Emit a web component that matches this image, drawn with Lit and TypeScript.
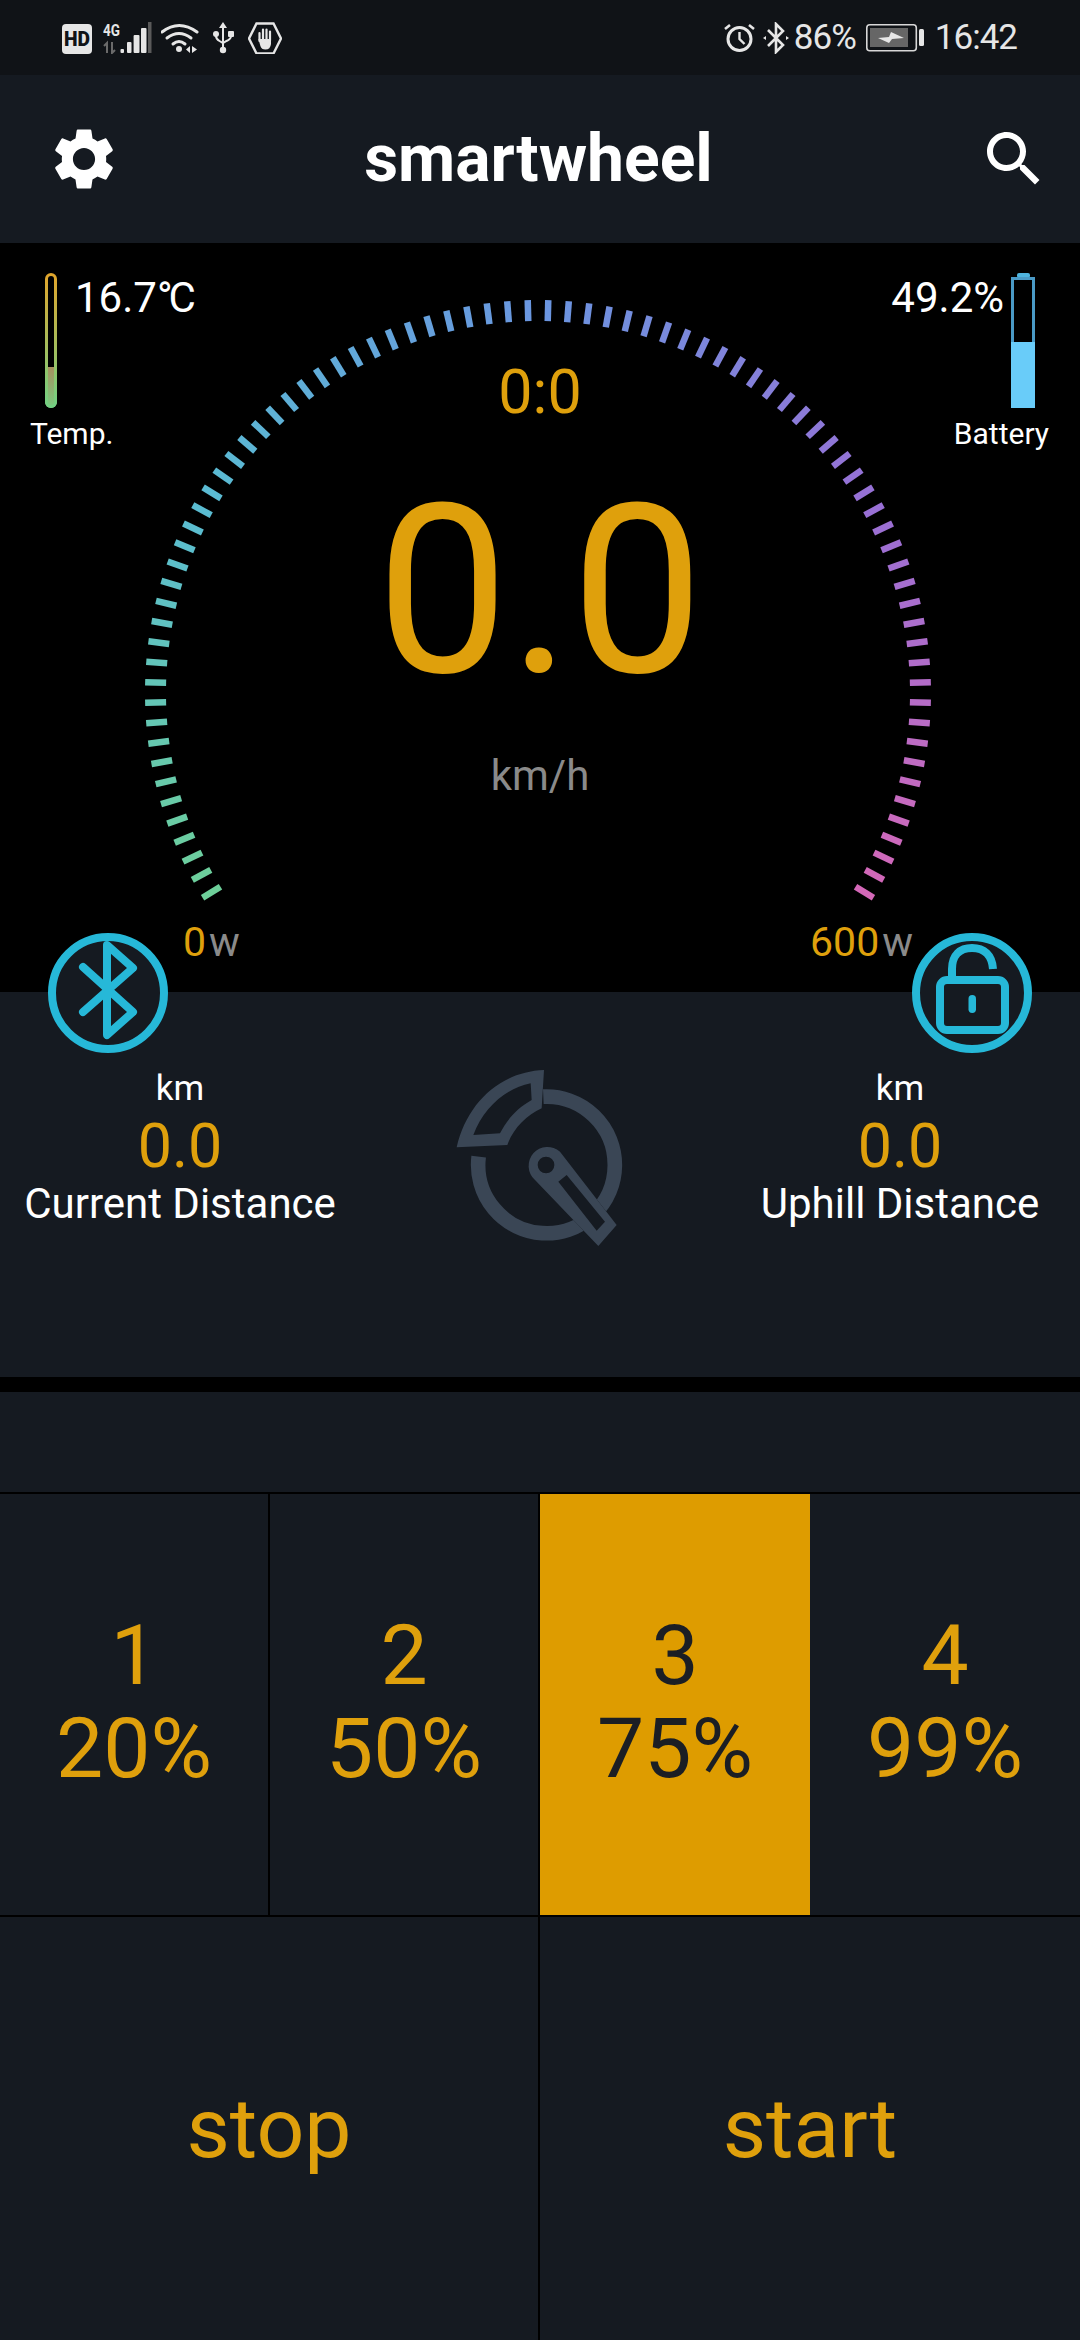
import { LitElement, css, html, svg } from 'lit';
import { customElement, state } from 'lit/decorators.js';
import { classMap } from 'lit/directives/class-map.js';

const GAUGE_CX = 538;
const GAUGE_CY = 450;
const TICK_COUNT = 82;
const SWEEP_START = 148.6; // degrees clockwise from +x, lower-left end of the arc
const SWEEP = 242.8;

const RAMP: [number, number, number][] = [
  [110, 208, 154],
  [90, 188, 210],
  [106, 150, 224],
  [152, 112, 213],
  [212, 104, 184],
];

function rampColor(t: number) {
  const p = t * (RAMP.length - 1);
  const i = Math.min(Math.floor(p), RAMP.length - 2);
  const f = p - i;
  const c = RAMP[i].map((v, k) => Math.round(v + (RAMP[i + 1][k] - v) * f));
  return `rgb(${c[0]},${c[1]},${c[2]})`;
}

const LEVELS = [
  { n: 1, pct: '20%' },
  { n: 2, pct: '50%' },
  { n: 3, pct: '75%' },
  { n: 4, pct: '99%' },
];

@customElement('app-root')
export class AppRoot extends LitElement {
  @state() private level = 3;

  static styles = css`
    :host {
      display: block;
      width: 1080px;
      height: 2340px;
      overflow: hidden;
      background: #151a21;
      font-family: Roboto, 'Noto Sans', sans-serif;
      color: #fff;
    }
    svg {
      display: block;
      flex: none;
    }

    /* system bar */
    .status {
      height: 75px;
      box-sizing: border-box;
      background: #101317;
      display: flex;
      justify-content: space-between;
      align-items: flex-start;
      padding: 22px 63px 0 62px;
      color: #e6e6e6;
    }
    .status-left {
      display: flex;
      gap: 9px;
    }
    .status-right {
      display: flex;
      align-items: center;
      height: 32px;
    }
    .status-text {
      font-size: 35px;
      line-height: 32px;
      letter-spacing: -1px;
    }
    .alarm {
      margin-right: 8px;
    }
    .bt {
      margin-right: 5px;
    }
    .batt {
      margin: 0 11px 0 10px;
    }

    /* title bar */
    .bar {
      height: 168px;
      display: grid;
      grid-template-columns: 1fr auto 1fr;
      align-items: center;
      padding: 0 30px;
    }
    .bar .gear {
      margin-left: 17px;
    }
    .bar h1 {
      margin: 0 3px 0 0;
      font-size: 66px;
      font-weight: 700;
      line-height: 72px;
    }
    .bar .search {
      justify-self: end;
    }

    /* speed dashboard: gauge and overlays share one grid cell */
    .dash {
      height: 749px;
      background: #000;
      display: grid;
    }
    .dash > * {
      grid-area: 1 / 1;
    }
    .readout {
      display: flex;
      flex-direction: column;
      align-items: center;
      padding-top: 114px;
    }
    .elapsed {
      font-size: 61px;
      line-height: 70px;
      color: #dfa00c;
    }
    .speed {
      margin-top: 45px;
      font-size: 236px;
      line-height: 240px;
      color: #dfa00c;
    }
    .unit {
      margin-top: 39px;
      font-size: 42px;
      line-height: 50px;
      color: #8a8a8a;
    }
    .sides {
      display: flex;
      justify-content: space-between;
      align-items: flex-start;
      padding-top: 30px;
    }
    .side {
      display: flex;
      flex-direction: column;
    }
    .side.right {
      align-items: flex-end;
      padding-right: 31px;
    }
    .side.left {
      padding-left: 30px;
    }
    .meter {
      display: flex;
      align-items: flex-start;
    }
    .side.left .meter {
      gap: 18px;
      margin-left: 15px;
    }
    .side.right .meter {
      gap: 7px;
      margin-right: 14px;
    }
    .meter > span {
      padding-top: 1px;
      font-size: 42px;
      line-height: 48px;
    }
    .deg {
      letter-spacing: -4px;
    }
    .side label {
      margin-top: 8px;
      font-size: 30px;
      line-height: 36px;
    }
    .scale {
      display: flex;
      justify-content: space-between;
      align-self: end;
      padding: 0 167px 25px 183px;
      font-size: 41px;
      line-height: 50px;
      color: #dfa00c;
    }
    .scale i {
      font-style: normal;
      color: #8a8a8a;
      margin-left: 3px;
    }

    /* trip distances */
    .trip {
      position: relative;
      height: 385px;
      display: grid;
      grid-template-columns: repeat(3, 360px);
    }
    .round {
      position: absolute;
      top: -59px;
    }
    .round.bluetooth {
      left: 48px;
    }
    .round.lock {
      right: 48px;
    }
    .dist {
      display: flex;
      flex-direction: column;
      align-items: center;
      padding-top: 77px;
    }
    .dist .km {
      font-size: 35px;
      line-height: 40px;
    }
    .dist .val {
      margin-top: 5px;
      font-size: 61px;
      line-height: 64px;
      color: #dfa00c;
    }
    .dist .name {
      margin-top: 1px;
      font-size: 42px;
      line-height: 50px;
    }
    .logo {
      justify-self: center;
      margin-top: 48px;
    }

    .rule {
      height: 15px;
      background: #000;
    }
    .spacer {
      height: 100px;
    }

    /* assist levels */
    .levels {
      display: grid;
      grid-template-columns: repeat(4, 1fr);
      height: 425px;
      box-sizing: border-box;
      border-top: 2px solid #000;
      border-bottom: 2px solid #000;
    }
    .level {
      display: flex;
      flex-direction: column;
      align-items: center;
      justify-content: center;
      padding-bottom: 6px;
      font-size: 84px;
      line-height: 93px;
      color: #dfa00c;
      border-right: 2px solid #000;
    }
    .level:last-child {
      border-right: 0;
    }
    .level.on {
      background: #de9c00;
      color: #1b1e24;
      border-right: 0;
    }
    .actions {
      display: grid;
      grid-template-columns: 1fr 1fr;
      height: 423px;
    }
    .action {
      display: flex;
      align-items: center;
      justify-content: center;
      font-size: 84px;
      color: #dfa00c;
    }
    .action:first-child {
      border-right: 2px solid #000;
    }
  `;

  private renderTicks() {
    const ticks = [];
    for (let i = 0; i < TICK_COUNT; i++) {
      const t = i / (TICK_COUNT - 1);
      const a = (SWEEP_START + SWEEP * t) * (Math.PI / 180);
      const cos = Math.cos(a);
      const sin = Math.sin(a);
      ticks.push(svg`<line x1=${GAUGE_CX + cos * 372} y1=${GAUGE_CY + sin * 372}
        x2=${GAUGE_CX + cos * 393} y2=${GAUGE_CY + sin * 393}
        stroke=${rampColor(t)} stroke-width="6.5" />`);
    }
    return ticks;
  }

  private renderStatus() {
    return html`<div class="status">
      <div class="status-left">
        <svg width="32" height="32" viewBox="0 0 32 32">
          <rect x="0" y="2" width="30" height="30" rx="4" fill="#e6e6e6" />
          <text x="15" y="24" text-anchor="middle" font-family="Roboto" font-weight="900" font-size="20" fill="#101317" textLength="26" lengthAdjust="spacingAndGlyphs">HD</text>
        </svg>
        <svg width="49" height="32" viewBox="0 0 49 32">
          <text x="0" y="14" font-family="Roboto" font-weight="700" font-size="16" fill="#e6e6e6" textLength="17" lengthAdjust="spacingAndGlyphs">4G</text>
          <path d="M4 31V21l-3 3M9 20v11l3-3" fill="none" stroke="#6a6a6a" stroke-width="2" />
          <rect x="17.500" y="27" width="3.500" height="4" rx="1" fill="#e6e6e6" />
          <rect x="24" y="20" width="4.500" height="11" rx="1" fill="#e6e6e6" />
          <rect x="30.600" y="13" width="5.900" height="18" rx="1" fill="#e6e6e6" />
          <rect x="38" y="6" width="5.500" height="25" rx="1" fill="#e6e6e6" />
          <rect x="45" y="0" width="3.500" height="31" fill="#5a5a5a" />
        </svg>
        <svg width="42" height="32" viewBox="0 0 42 32">
          <g fill="none" stroke="#e6e6e6" stroke-width="3" stroke-linecap="round">
            <path d="M1 10Q18-3 36 10" />
            <path d="M6 16Q18 7 30 16" />
            <path d="M12 22Q18 17 24 22" />
          </g>
          <circle cx="18" cy="27" r="3" fill="#e6e6e6" />
          <path d="M29 24v7l-4-3.500zM31 24v7l5-3.500z" fill="#e6e6e6" />
        </svg>
        <svg width="27" height="32" viewBox="0 0 27 32">
          <path d="M11 0l4 6h-3v22h-2V6H7z" fill="#e6e6e6" />
          <path d="M4 12v2q0 3 3.500 5l3.500 2 3.500-2q4.500-2 4.500-5v-2" fill="none" stroke="#e6e6e6" stroke-width="2" />
          <circle cx="4" cy="12" r="3" fill="#e6e6e6" />
          <rect x="16" y="9" width="6" height="6" rx="1" fill="#e6e6e6" />
          <circle cx="11" cy="28" r="3.200" fill="#e6e6e6" />
        </svg>
        <svg width="34" height="32" viewBox="0 0 34 32">
          <path d="M1 16.500L8.500 1.500H25.500L33 16.500L25.500 31.500H8.500z" fill="none" stroke="#e6e6e6" stroke-width="2.400" />
          <g stroke="#e6e6e6" stroke-width="2.200" stroke-linecap="round">
            <path d="M11.500 11v8M15 7.500v11M18.500 7.500v11M22 9.500v9" />
          </g>
          <path d="M10.400 17l2 7q1 3.500 5 3.500 5 0 5.600-5.500v-5z" fill="#e6e6e6" />
        </svg>
      </div>
      <div class="status-right">
        <svg class="alarm" width="31" height="32" viewBox="0 0 31 32">
          <circle cx="15.500" cy="17" r="11.500" fill="none" stroke="#e6e6e6" stroke-width="3" />
          <path d="M15.500 10v7l5 5" fill="none" stroke="#e6e6e6" stroke-width="2.400" />
          <path d="M1 7l5-4M30 7l-5-4" stroke="#e6e6e6" stroke-width="2.600" />
        </svg>
        <svg class="bt" width="26" height="32" viewBox="0 0 26 32">
          <path d="M5 8l15 15-7 7V2l7 7L5 24" fill="none" stroke="#e6e6e6" stroke-width="2.600" />
          <path d="M0 16l3-2v4zM26 16l-3-2v4z" fill="#e6e6e6" />
        </svg>
        <span class="status-text">86%</span>
        <svg class="batt" width="58" height="28" viewBox="0 0 58 28">
          <rect x="0.800" y="0.800" width="49.500" height="26" rx="3" fill="none" stroke="#d8d8d8" stroke-width="1.600" />
          <rect x="4" y="4" width="38" height="19" fill="#666" />
          <path d="M12 14l11-1 2-5 13 6-12 1-3 4z" fill="#e6e6e6" />
          <rect x="53" y="5" width="5" height="17" rx="1.500" fill="#e6e6e6" />
        </svg>
        <span class="status-text">16:42</span>
      </div>
    </div>`;
  }

  private renderDash() {
    return html`<section class="dash">
      <svg width="1080" height="749" viewBox="0 0 1080 749">${this.renderTicks()}</svg>
      <div class="readout">
        <div class="elapsed">0:0</div>
        <div class="speed">0.0</div>
        <div class="unit">km/h</div>
      </div>
      <div class="sides">
        <div class="side left">
          <div class="meter">
            <svg width="12" height="135" viewBox="0 0 12 135">
              <defs>
                <linearGradient id="thermo" x1="0" y1="0" x2="0" y2="1">
                  <stop offset="0" stop-color="#e0a52c" />
                  <stop offset="1" stop-color="#72d083" />
                </linearGradient>
                <linearGradient id="thermoFill" x1="0" y1="0" x2="0" y2="1">
                  <stop offset="0" stop-color="#a8905f" />
                  <stop offset="1" stop-color="#78cc80" />
                </linearGradient>
              </defs>
              <path d="M0 94h12v35a6 6 0 0 1-12 0z" fill="url(#thermoFill)" />
              <rect x="1.500" y="1.500" width="9" height="132" rx="4.500" fill="none" stroke="url(#thermo)" stroke-width="3" />
            </svg>
            <span>16.7<span class="deg">°C</span></span>
          </div>
          <label>Temp.</label>
        </div>
        <div class="side right">
          <div class="meter">
            <span>49.2%</span>
            <svg width="24" height="135" viewBox="0 0 24 135">
              <rect x="6" y="0" width="13" height="5" rx="2" fill="#4fb4de" />
              <rect x="1.500" y="5.500" width="21" height="128" fill="none" stroke="#4a9ac6" stroke-width="3" />
              <rect x="0" y="69" width="24" height="66" fill="#69ccf9" />
            </svg>
          </div>
          <label>Battery</label>
        </div>
      </div>
      <div class="scale">
        <span>0<i>w</i></span>
        <span>600<i>w</i></span>
      </div>
    </section>`;
  }

  private renderTrip() {
    return html`<section class="trip">
      <svg class="round bluetooth" width="120" height="120" viewBox="0 0 120 120">
        <circle cx="60" cy="60" r="56" fill="#151a21" stroke="#26b8d8" stroke-width="8" />
        <path d="M35 34l50 45-26 23V12l26 23-50 44" fill="none" stroke="#26b8d8" stroke-width="8" stroke-linecap="round" stroke-linejoin="round" />
      </svg>
      <svg class="round lock" width="120" height="120" viewBox="0 0 120 120">
        <circle cx="60" cy="60" r="56" fill="#151a21" stroke="#26b8d8" stroke-width="8" />
        <rect x="28" y="47" width="65" height="50" rx="7" fill="none" stroke="#26b8d8" stroke-width="8" />
        <path d="M40 46V36C40 22 48 15 60 15S80 22 81 36" fill="none" stroke="#26b8d8" stroke-width="8" />
        <rect x="56.500" y="62" width="7.500" height="18" rx="3.700" fill="#26b8d8" />
      </svg>
      <div class="dist">
        <div class="km">km</div>
        <div class="val">0.0</div>
        <div class="name">Current Distance</div>
      </div>
      <svg class="logo" width="240" height="220" viewBox="0 0 720 660">
        <path d="M370 170A205 205 0 1 1 176 350" fill="none" stroke="#3a4655" stroke-width="44" />
        <path fill-rule="evenodd" fill="#3a4655" d="M372 90C240 95 140 190 110 322L262 315C280 265 320 225 365 205ZM332 130C255 145 190 205 160 285L240 280C260 240 290 205 335 180Z" />
        <path d="M535 618L345 420A56 56 0 1 1 420 335L590 555Z" fill="#151a21" />
        <path fill-rule="evenodd" fill="#3a4655" d="M535 618L345 420A56 56 0 1 1 420 335L590 555ZM378 350A25 25 0 1 0 378.100 400A25 25 0 1 0 378 350ZM440 405L415 425L530 572L555 545Z" />
      </svg>
      <div class="dist">
        <div class="km">km</div>
        <div class="val">0.0</div>
        <div class="name">Uphill Distance</div>
      </div>
    </section>`;
  }

  render() {
    return html`
      ${this.renderStatus()}
      <header class="bar">
        <svg class="gear" width="74" height="74" viewBox="0 0 24 24" fill="#fff">
          <path d="M19.14 12.94c.04-.3.06-.61.06-.94 0-.32-.02-.64-.07-.94l2.03-1.58c.18-.14.23-.41.12-.61l-1.92-3.32c-.12-.22-.37-.29-.59-.22l-2.39.96c-.5-.38-1.03-.7-1.62-.94l-.36-2.54c-.04-.24-.24-.41-.48-.41h-3.84c-.24 0-.43.17-.47.41l-.36 2.54c-.59.24-1.13.57-1.62.94l-2.39-.96c-.22-.08-.47 0-.59.22L2.74 8.87c-.12.21-.08.47.12.61l2.03 1.58c-.05.3-.09.63-.09.94s.02.64.07.94l-2.03 1.58c-.18.14-.23.41-.12.61l1.92 3.32c.12.22.37.29.59.22l2.39-.96c.5.38 1.03.7 1.62.94l.36 2.54c.05.24.24.41.48.41h3.84c.24 0 .44-.17.47-.41l.36-2.54c.59-.24 1.13-.56 1.62-.94l2.39.96c.22.08.47 0 .59-.22l1.92-3.32c.12-.22.07-.47-.12-.61l-2.01-1.58zM12 15.6c-1.98 0-3.6-1.62-3.6-3.6s1.62-3.6 3.6-3.6 3.6 1.62 3.6 3.6-1.62 3.6-3.6 3.6z" />
        </svg>
        <h1>smartwheel</h1>
        <svg class="search" width="72" height="72" viewBox="0 0 24 24" fill="#fff">
          <path d="M15.5 14h-.79l-.28-.27C15.41 12.59 16 11.11 16 9.5 16 5.91 13.09 3 9.5 3S3 5.91 3 9.5 5.91 16 9.5 16c1.61 0 3.09-.59 4.23-1.57l.27.28v.79l5 4.99L20.49 19l-4.99-5zm-6 0C7.01 14 5 11.99 5 9.5S7.01 5 9.5 5 14 7.01 14 9.5 11.99 14 9.5 14z" />
        </svg>
      </header>
      ${this.renderDash()}
      ${this.renderTrip()}
      <div class="rule"></div>
      <div class="spacer"></div>
      <div class="levels">
        ${LEVELS.map(
          (l) => html`<div class=${classMap({ level: true, on: l.n === this.level })}>
            <span>${l.n}</span><span>${l.pct}</span>
          </div>`,
        )}
      </div>
      <div class="actions">
        <div class="action">stop</div>
        <div class="action">start</div>
      </div>
    `;
  }
}

declare global {
  interface HTMLElementTagNameMap {
    'app-root': AppRoot;
  }
}
